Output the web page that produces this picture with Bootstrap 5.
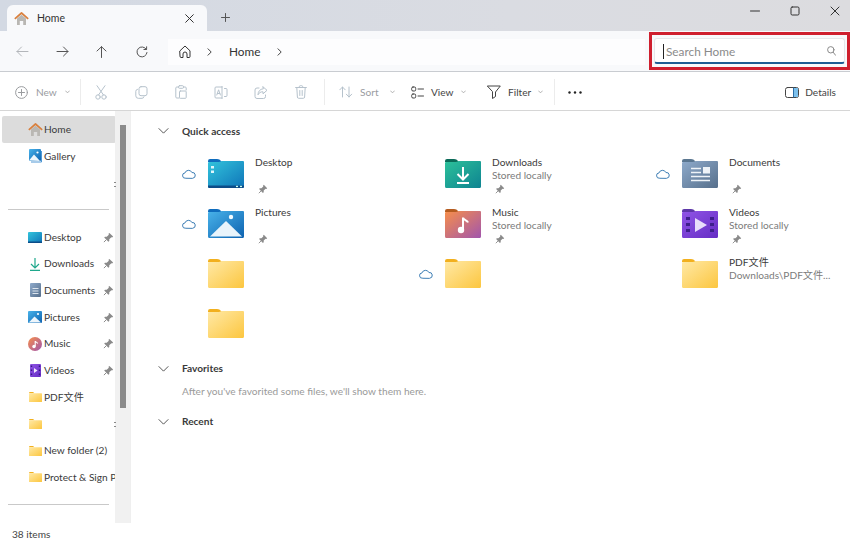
<!DOCTYPE html>
<html lang="en">
<head>
<meta charset="utf-8">
<title>Home - File Explorer</title>
<link href="https://cdn.jsdelivr.net/npm/bootstrap@5.3.0/dist/css/bootstrap.min.css" rel="stylesheet">
<style>
html,body{height:100%;}
body{width:850px;height:540px;overflow:hidden;background:#fff;color:#3a3a3a;font:10.15px/13px "Lato","Noto Sans CJK SC",sans-serif;display:flex;flex-direction:column;}
svg{display:block;flex:none;}
.defs-box{position:absolute;width:0;height:0;}
.ln{fill:none;stroke:currentColor;stroke-width:1;stroke-linecap:round;stroke-linejoin:round;}
.title-strip{height:31px;flex:none;background:linear-gradient(90deg,#d3d9e3,#dadce2 60%,#dcdcdf);padding-left:7px;}
.win-tab{width:200px;height:26px;margin-top:5px;background:#f8f9fb;border-radius:6px 6px 0 0;padding:0 13px 0 7px;font-size:10.5px;color:#333;}
.tab-plus{margin-left:14px;margin-top:13px;color:#555;}
.win-btns{margin-left:auto;color:#333;gap:30px;padding-right:10px;padding-bottom:10px;}
.nav-strip{height:41px;flex:none;background:#f8f9fb;border-bottom:1px solid #c9ccd1;padding-left:16px;padding-top:2px;}
.nav-slot{width:40px;color:#555;}
.nav-slot:first-child{color:#b3b6ba;}
.addr{width:477px;height:26px;margin-left:-8px;background:#fdfdfe;padding-left:11px;padding-bottom:1px;font-size:11.8px;color:#333;}
.addr-sep{color:#444;}
.sep-a{margin-left:16px;margin-right:17px;}
.sep-b{margin-left:17px;}
.mark-box{width:201px;height:38px;margin-left:4px;border:3px solid #cf1f2e;padding:3px 2px;margin-top:-2px;}
.search-field{height:100%;background:#fff;border:1px solid #e6e7ea;border-bottom:2px solid #1f5e94;border-radius:3px;padding:1px 8px 0;color:#8a8a8a;font-size:11.8px;}
.caret-bar{width:1px;height:15px;background:#222;margin-right:2px;}
.tool-strip{height:39px;flex:none;border-bottom:1px solid #d6d6d6;padding-left:15px;padding-top:2px;color:#9a9c9f;}
.tool-new{width:65px;gap:8px;}
.tool-div{width:1px;height:26px;background:#ececec;}
.tool-icons{width:243px;}
.tool-one{width:40px;color:#b6c2cc;}
.tool-sort{width:67px;padding-left:14px;gap:7px;}
.tool-dark{color:#444;gap:7px;}
.tool-view{width:95px;padding-left:19px;}
.tool-filter{width:67px;}
.chev-tiny{color:#a4a4a4;}
.tool-dots{margin-left:13px;color:#222;}
.tool-details{margin-left:auto;padding-right:14px;gap:6px;color:#444;}
.main-split{flex:1 1 auto;min-height:0;}
.side-pane{width:131px;flex:none;position:relative;border-right:1px solid #efefef;padding:5px 0 0 2px;}
.side-list{width:114px;}
.side-row{height:26.7px;padding-left:26px;gap:2px;white-space:nowrap;overflow:hidden;color:#3a3a3a;}
.side-row .ico-cell{width:14px;flex:none;display:flex;justify-content:center;}
.side-row.is-on{background:#dcdcdc;border-radius:2px;height:27px;}
.side-row .pin-cell{margin-left:auto;margin-right:2px;color:#8a8a8a;}
.side-gap{height:26px;}
.side-line{height:1px;background:#c9c9c9;margin:0 7px 0 6px;}
.line-a{margin-top:13px;margin-bottom:14px;}
.line-b{margin-top:13px;}
.side-track{position:absolute;left:115px;top:0;width:15px;height:412px;background:#f1f1f1;}
.side-thumb{position:absolute;left:5px;top:14px;width:6px;height:283px;background:#8b8b8b;}
.grip-a,.grip-b{position:absolute;left:114px;width:2px;height:5px;border-top:1px solid #888;border-bottom:1px solid #888;}
.grip-a{top:71px;}
.grip-b{top:311px;}
.status-strip{height:17px;flex:none;padding:6px 0 0 12px;color:#444;font-size:10.15px;}
.content-pane{flex:1 1 auto;padding:10px 0 0 27px;}
.sec-head{height:20px;font-weight:700;color:#3a3a3a;gap:13px;}
.grid-items{display:grid;grid-template-columns:repeat(3,237px);grid-auto-rows:50.2px;margin-top:14px;margin-left:17px;margin-bottom:3px;}
.tile{display:flex;align-items:flex-start;}
.cloud-cell{width:33px;flex:none;padding:13.5px 0 0 7px;color:#3f7fb5;}
.tile-ico{margin-top:3.5px;margin-right:11px;}
.tile-txt{padding-top:1px;}
.tile-sub{color:#7b7b7b;}
.tile-pin{height:13px;color:#8a8a8a;padding:2px 0 0 3px;}
.fav-note{color:#9a9a9a;margin:4px 0 13px 24px;line-height:16px;}
</style>
</head>
<body>
<svg class="defs-box" aria-hidden="true">
<defs>
<linearGradient id="gY" x1="0" y1="0" x2="1" y2="1"><stop offset="0" stop-color="#ffe9a6"/><stop offset="1" stop-color="#fcc63f"/></linearGradient>
<linearGradient id="gD" x1="0" y1="0" x2="1" y2="1"><stop offset="0" stop-color="#32c4dc"/><stop offset="1" stop-color="#0f74b8"/></linearGradient>
<linearGradient id="gP" x1="0" y1="0" x2="1" y2="1"><stop offset="0" stop-color="#49b3ea"/><stop offset="1" stop-color="#0d62b0"/></linearGradient>
<linearGradient id="gDl" x1="0" y1="0" x2="1" y2="1"><stop offset="0" stop-color="#2cc19a"/><stop offset="1" stop-color="#0e8391"/></linearGradient>
<linearGradient id="gM" x1="0" y1="0" x2="1" y2="1"><stop offset="0" stop-color="#f78f4a"/><stop offset="1" stop-color="#a155ad"/></linearGradient>
<linearGradient id="gDc" x1="0" y1="0" x2="1" y2="1"><stop offset="0" stop-color="#8eaacb"/><stop offset="1" stop-color="#566f8b"/></linearGradient>
<linearGradient id="gV" x1="0" y1="0" x2="1" y2="1"><stop offset="0" stop-color="#9055e6"/><stop offset="1" stop-color="#652cc4"/></linearGradient>
<symbol id="f-yellow" viewBox="0 0 36 29"><path d="M0 2a2 2 0 0 1 2-2h7c2 0 3 .7 4 2l1 1H0z" fill="#f2b01e"/><path d="M0 4q0-1 1-1h10l3-1h21q1 0 1 1v24.500q0 1.500-1.500 1.500h-33Q0 29 0 27.500z" fill="url(#gY)"/></symbol>
<symbol id="f-desktop" viewBox="0 0 36 29"><path d="M0 2a2 2 0 0 1 2-2h7c2 0 3 .7 4 2l1 1H0z" fill="#0f6cbd"/><path d="M0 4q0-1 1-1h10l3-1h21q1 0 1 1v24.500q0 1.500-1.500 1.500h-33Q0 29 0 27.500z" fill="url(#gD)"/><path d="M0 26.500h36v1q0 1.500-1.500 1.500h-33Q0 29 0 27.500z" fill="#0c4c88"/><rect x="3" y="7" width="3" height="2.500" fill="#dff6fb"/><rect x="3" y="11.500" width="3" height="2.500" fill="#dff6fb"/><rect x="28" y="26.800" width="2" height="1.300" fill="#cfe"/><rect x="32" y="26.800" width="2" height="1.300" fill="#cfe"/></symbol>
<symbol id="f-pics" viewBox="0 0 36 29"><path d="M0 2a2 2 0 0 1 2-2h7c2 0 3 .7 4 2l1 1H0z" fill="#0f6cbd"/><path d="M0 4q0-1 1-1h10l3-1h21q1 0 1 1v24.500q0 1.500-1.500 1.500h-33Q0 29 0 27.500z" fill="url(#gP)"/><path d="M2 27.500 18 12l16 15.500z" fill="#e9f4fb"/><circle cx="23" cy="8" r="2.200" fill="#f2fbff"/></symbol>
<symbol id="f-down" viewBox="0 0 36 29"><path d="M0 2a2 2 0 0 1 2-2h7c2 0 3 .7 4 2l1 1H0z" fill="#0b6a58"/><path d="M0 4q0-1 1-1h10l3-1h21q1 0 1 1v24.500q0 1.500-1.500 1.500h-33Q0 29 0 27.500z" fill="url(#gDl)"/><path d="M18 8v12M12.500 15l5.500 5.500 5.500-5.500M12 24h12" fill="none" stroke="#fff" stroke-width="2"/></symbol>
<symbol id="f-music" viewBox="0 0 36 29"><path d="M0 2a2 2 0 0 1 2-2h7c2 0 3 .7 4 2l1 1H0z" fill="#b55c20"/><path d="M0 4q0-1 1-1h10l3-1h21q1 0 1 1v24.500q0 1.500-1.500 1.500h-33Q0 29 0 27.500z" fill="url(#gM)"/><circle cx="16" cy="21" r="3.200" fill="#fff"/><path d="M18 21V8.500c0 2.500 4.500 2.500 5 5" fill="none" stroke="#fff" stroke-width="2"/></symbol>
<symbol id="f-docs" viewBox="0 0 36 29"><path d="M0 2a2 2 0 0 1 2-2h7c2 0 3 .7 4 2l1 1H0z" fill="#5a7690"/><path d="M0 4q0-1 1-1h10l3-1h21q1 0 1 1v24.500q0 1.500-1.500 1.500h-33Q0 29 0 27.500z" fill="url(#gDc)"/><path d="M9 9.500h10M9 13.500h10M9 17.500h19M9 21.500h19" stroke="#eef3f8" stroke-width="1.600"/><rect x="21" y="8" width="7" height="6.500" fill="#eef3f8"/></symbol>
<symbol id="f-video" viewBox="0 0 36 29"><path d="M0 2a2 2 0 0 1 2-2h7c2 0 3 .7 4 2l1 1H0z" fill="#5d37a8"/><path d="M0 4q0-1 1-1h10l3-1h21q1 0 1 1v24.500q0 1.500-1.500 1.500h-33Q0 29 0 27.500z" fill="url(#gV)"/><path d="M13 9v14l12-7z" fill="#e8dcfb"/><path d="M4 8h4v3H4zM4 14h4v3H4zM4 20h4v3H4zM28 8h4v3h-4zM28 14h4v3h-4zM28 20h4v3h-4z" fill="#3e1f8c"/></symbol>
<symbol id="i-pin" viewBox="0 0 10 10"><path d="M5.800.8 9.200 4.200 8.300 5 7.600 4.700 5.700 6.600 5.700 8.200 4.900 8.900 1.100 5.100 1.800 4.300 3.400 4.300 5.300 2.400 5 1.700z" fill="currentColor"/><path d="M3 7 .8 9.200" stroke="currentColor" stroke-width=".9"/></symbol>
<symbol id="i-cloud" viewBox="0 0 14 10"><path class="ln" d="M3.500 9.300A2.700 2.700 0 0 1 3 3.900 3.700 3.700 0 0 1 9.900 3.500 2.900 2.900 0 0 1 10.800 9.300z"/></symbol>
<symbol id="i-chev" viewBox="0 0 12 7"><path class="ln" d="M.7.7 6 6 11.300.7"/></symbol>
<symbol id="i-tiny" viewBox="0 0 6 4"><path class="ln" d="M.7.7 3 3 5.300.7"/></symbol>
<symbol id="i-home" viewBox="0 0 15 13"><path d="M3 6.500 7.500 2.800 12 6.500V13H9.200V9H5.800V13H3z" fill="#b9b7b3"/><path d="M.8 6.800 7.500 1l6.700 5.800" fill="none" stroke="#d9803e" stroke-width="1.700" stroke-linejoin="round"/></symbol>
<symbol id="i-gallery" viewBox="0 0 14 14"><rect x="1" y="0" width="12" height="12" rx="1" fill="url(#gP)"/><path d="M1 11.500 6 5.500l6 6.500z" fill="#eef6fc"/><circle cx="9.500" cy="3.500" r="1.100" fill="#fff"/><path d="M13.500 2v11H3" fill="none" stroke="#3c8dd0" stroke-width=".9"/></symbol>
<symbol id="i-sdesk" viewBox="0 0 14 11"><rect width="14" height="11" rx="1" fill="url(#gD)"/><rect y="9.500" width="14" height="1.500" fill="#0c4c88"/></symbol>
<symbol id="i-sdown" viewBox="0 0 12 14"><path d="M6 1v9.500M2 7l4 4 4-4M1 13.300h10" fill="none" stroke="#1fa88c" stroke-width="1.200"/></symbol>
<symbol id="i-sdoc" viewBox="0 0 11 14"><rect width="11" height="14" rx="1" fill="url(#gDc)"/><path d="M2.500 5.500h6M2.500 8h6M2.500 10.500h6" stroke="#e7edf4" stroke-width=".9"/></symbol>
<symbol id="i-spic" viewBox="0 0 14 12"><rect width="14" height="12" rx="1" fill="url(#gP)"/><path d="M.8 11.500 6.500 5.500l6.500 6z" fill="#eef6fc"/><circle cx="10" cy="3" r="1.100" fill="#fff"/></symbol>
<symbol id="i-smusic" viewBox="0 0 14 14"><circle cx="7" cy="7" r="7" fill="url(#gM)"/><circle cx="6" cy="9.500" r="1.700" fill="#fff"/><path d="M7.200 9.500V4c0 1 2 1.200 2.500 2.500" fill="none" stroke="#fff" stroke-width="1.100"/></symbol>
<symbol id="i-svideo" viewBox="0 0 11 13"><rect width="11" height="13" rx="1" fill="url(#gV)"/><path d="M4 4v5l3.500-2.500z" fill="#efe6fd"/><path d="M.8 1.500h1.400v1.500H.8zM.8 5.500h1.400V7H.8zM.8 9.500h1.400V11H.8zM8.800 1.500h1.400v1.500H8.800zM8.800 5.500h1.400V7H8.800zM8.800 9.500h1.400V11H8.800z" fill="#35197f"/></symbol>
<symbol id="i-sfold" viewBox="0 0 13 10"><path d="M0 1a1 1 0 0 1 1-1h3l1.500 1.200H0z" fill="#f2b01e"/><rect y="1.200" width="13" height="8.800" rx=".6" fill="url(#gY)"/></symbol>
</defs>
</svg>

<header class="title-strip d-flex align-items-start">
  <div class="win-tab d-flex align-items-center">
    <svg width="15" height="13" class="me-2"><use href="#i-home"/></svg>
    <span>Home</span>
    <svg width="9" height="9" viewBox="0 0 9 9" class="ms-auto"><path class="ln" d="M.7.7 8.300 8.300M8.300.7.700 8.300"/></svg>
  </div>
  <svg width="9" height="9" viewBox="0 0 9 9" class="tab-plus"><path class="ln" d="M4.500.5v8M.5 4.500h8"/></svg>
  <div class="win-btns d-flex align-items-center h-100">
    <svg width="10" height="10" viewBox="0 0 10 10"><path class="ln" d="M.5 5h9"/></svg>
    <svg width="10" height="10" viewBox="0 0 10 10"><rect class="ln" x="1" y="1" width="8" height="8" rx="1.200" stroke-width="1.200"/></svg>
    <svg width="10" height="10" viewBox="0 0 10 10"><path class="ln" d="M1 1l8 8M9 1 1 9"/></svg>
  </div>
</header>

<nav class="nav-strip d-flex align-items-center">
  <div class="d-flex">
    <div class="nav-slot d-flex"><svg width="13" height="11" viewBox="0 0 13 11"><path class="ln" d="M12 5.500H1M5.500 1 1 5.500 5.500 10"/></svg></div>
    <div class="nav-slot d-flex"><svg width="13" height="11" viewBox="0 0 13 11"><path class="ln" d="M1 5.500h11M7.500 1 12 5.500 7.500 10"/></svg></div>
    <div class="nav-slot d-flex"><svg width="11" height="12" viewBox="0 0 11 12"><path class="ln" d="M5.500 11.500V.7M1 5 5.500.7 10 5"/></svg></div>
    <div class="nav-slot d-flex"><svg width="12" height="12" viewBox="0 0 12 12"><path class="ln" d="M10.300 3.300A5 5 0 1 0 11 6.500M10.600 .8v2.700H7.900"/></svg></div>
  </div>
  <div class="addr d-flex align-items-center">
    <svg width="12" height="13" viewBox="0 0 12 13"><path class="ln" d="M1 5.800 6 1l5 4.800v5.700a1 1 0 0 1-1 1H8V9a2 2 0 0 0-4 0v3.500H2a1 1 0 0 1-1-1z" /></svg>
    <svg width="5" height="8" viewBox="0 0 5 8" class="addr-sep sep-a"><path class="ln" d="M1 .8 4.200 4 1 7.200"/></svg>
    <span>Home</span>
    <svg width="5" height="8" viewBox="0 0 5 8" class="addr-sep sep-b"><path class="ln" d="M1 .8 4.200 4 1 7.200"/></svg>
  </div>
  <div class="mark-box">
    <div class="search-field d-flex align-items-center">
      <span class="caret-bar"></span><span>Search Home</span>
      <svg width="9" height="10" viewBox="0 0 9 10" class="ms-auto"><circle class="ln" cx="3.800" cy="3.800" r="3.200"/><path class="ln" d="M6.200 6.300 8.600 9.300"/></svg>
    </div>
  </div>
</nav>

<div class="tool-strip d-flex align-items-center">
  <div class="tool-new d-flex align-items-center">
    <svg width="13" height="13" viewBox="0 0 13 13"><circle class="ln" cx="6.500" cy="6.500" r="5.900"/><path class="ln" d="M6.500 3.500v6M3.500 6.500h6"/></svg>
    <span>New</span>
    <svg width="5" height="4" class="chev-tiny"><use href="#i-tiny"/></svg>
  </div>
  <span class="tool-div"></span>
  <div class="tool-icons d-flex align-items-center">
    <div class="tool-one d-flex justify-content-center"><svg width="12" height="15" viewBox="0 0 12 15"><path class="ln" d="M2 .7 8.500 10M10 .7 3.500 10"/><circle class="ln" cx="3" cy="12" r="2.200"/><circle class="ln" cx="9" cy="12" r="2.200"/></svg></div>
    <div class="tool-one d-flex justify-content-center"><svg width="13" height="13" viewBox="0 0 13 13"><rect class="ln" x="4" y=".7" width="8" height="9" rx="2"/><path class="ln" d="M2.500 3.300A2 2 0 0 0 .8 5.300v4.500a2.500 2.500 0 0 0 2.500 2.500H7a2 2 0 0 0 2-1.500"/></svg></div>
    <div class="tool-one d-flex justify-content-center"><svg width="12" height="14" viewBox="0 0 12 14"><path class="ln" d="M3.500 2H1.800a1 1 0 0 0-1 1v9a1 1 0 0 0 1 1H4M8.500 2h1.700a1 1 0 0 1 1 1v2"/><rect class="ln" x="3.500" y=".7" width="5" height="2.600" rx="1"/><rect class="ln" x="4.500" y="6" width="6.700" height="7.300" rx=".8"/></svg></div>
    <div class="tool-one d-flex justify-content-center"><svg width="14" height="13" viewBox="0 0 14 13"><path class="ln" d="M8 1H2a1 1 0 0 0-1 1v9a1 1 0 0 0 1 1h6M8 .5v12M10.500 2.500h1.500a1 1 0 0 1 1 1v6a1 1 0 0 1-1 1h-1.500M2.800 9l1.800-5.200L6.400 9M3.400 7.500h2.400"/></svg></div>
    <div class="tool-one d-flex justify-content-center"><svg width="14" height="13" viewBox="0 0 14 13"><path class="ln" d="M5 2H3a2 2 0 0 0-2 2v6.500a2 2 0 0 0 2 2h6.500a2 2 0 0 0 2-2V9M9 .8 13 4.300 9 7.800V5.800C6.500 5.600 5 7 4 8.800 4 5.500 6 3 9 2.800z"/></svg></div>
    <div class="tool-one d-flex justify-content-center"><svg width="12" height="14" viewBox="0 0 12 14"><path class="ln" d="M.6 2.500h10.800M4.300 2.500V1.700a1 1 0 0 1 1-1h1.400a1 1 0 0 1 1 1v.8M1.800 2.500l.6 9.500a1.300 1.300 0 0 0 1.300 1.300h4.600a1.300 1.300 0 0 0 1.300-1.300l.6-9.500M4.800 5.500v5M7.200 5.500v5"/></svg></div>
  </div>
  <span class="tool-div"></span>
  <div class="tool-sort d-flex align-items-center">
    <svg width="14" height="12" viewBox="0 0 14 12" class="tool-one w-auto"><path class="ln" d="M3.500 11V1M.8 3.800 3.500 1l2.700 2.800M10 1v10M7.300 8.200 10 11l2.700-2.800"/></svg>
    <span>Sort</span>
    <svg width="5" height="4" class="chev-tiny ms-1"><use href="#i-tiny"/></svg>
  </div>
  <div class="tool-view tool-dark d-flex align-items-center">
    <svg width="13" height="13" viewBox="0 0 13 13"><rect class="ln" x=".7" y="1" width="4" height="4" rx="1.300"/><rect class="ln" x=".7" y="8" width="4" height="4" rx="1.300"/><path class="ln" d="M7 3h5.500M7 10h5.500"/></svg>
    <span>View</span>
    <svg width="5" height="4" class="chev-tiny"><use href="#i-tiny"/></svg>
  </div>
  <div class="tool-filter tool-dark d-flex align-items-center">
    <svg width="14" height="14" viewBox="0 0 14 14"><path class="ln" d="M.7 1h12.600L8.500 7v4.500l-3 2V7z"/></svg>
    <span>Filter</span>
    <svg width="5" height="4" class="chev-tiny"><use href="#i-tiny"/></svg>
  </div>
  <span class="tool-div"></span>
  <svg width="14" height="3" viewBox="0 0 14 3" class="tool-dots"><circle cx="1.500" cy="1.500" r="1.200" fill="currentColor"/><circle cx="7" cy="1.500" r="1.200" fill="currentColor"/><circle cx="12.500" cy="1.500" r="1.200" fill="currentColor"/></svg>
  <div class="tool-details d-flex align-items-center">
    <svg width="14" height="11" viewBox="0 0 14 11"><rect class="ln" x=".5" y=".5" width="13" height="10" rx="2"/><rect x="8.500" y="1" width="4.500" height="9" fill="#7cc0ec"/><path d="M8.500 .5v10" stroke="#2b6ea8"/></svg>
    <span>Details</span>
  </div>
</div>

<div class="main-split d-flex">
  <aside class="side-pane">
    <div class="side-list">
      <div class="side-row is-on d-flex align-items-center"><span class="ico-cell"><svg width="15" height="13"><use href="#i-home"/></svg></span><span>Home</span></div>
      <div class="side-row d-flex align-items-center"><span class="ico-cell"><svg width="14" height="14"><use href="#i-gallery"/></svg></span><span>Gallery</span></div>
      <div class="side-gap"></div>
      <div class="side-line line-a"></div>
      <div class="side-row d-flex align-items-center"><span class="ico-cell"><svg width="14" height="11"><use href="#i-sdesk"/></svg></span><span>Desktop</span><svg width="11" height="11" class="pin-cell"><use href="#i-pin"/></svg></div>
      <div class="side-row d-flex align-items-center"><span class="ico-cell"><svg width="12" height="14"><use href="#i-sdown"/></svg></span><span>Downloads</span><svg width="11" height="11" class="pin-cell"><use href="#i-pin"/></svg></div>
      <div class="side-row d-flex align-items-center"><span class="ico-cell"><svg width="11" height="14"><use href="#i-sdoc"/></svg></span><span>Documents</span><svg width="11" height="11" class="pin-cell"><use href="#i-pin"/></svg></div>
      <div class="side-row d-flex align-items-center"><span class="ico-cell"><svg width="14" height="12"><use href="#i-spic"/></svg></span><span>Pictures</span><svg width="11" height="11" class="pin-cell"><use href="#i-pin"/></svg></div>
      <div class="side-row d-flex align-items-center"><span class="ico-cell"><svg width="14" height="14"><use href="#i-smusic"/></svg></span><span>Music</span><svg width="11" height="11" class="pin-cell"><use href="#i-pin"/></svg></div>
      <div class="side-row d-flex align-items-center"><span class="ico-cell"><svg width="11" height="13"><use href="#i-svideo"/></svg></span><span>Videos</span><svg width="11" height="11" class="pin-cell"><use href="#i-pin"/></svg></div>
      <div class="side-row d-flex align-items-center"><span class="ico-cell"><svg width="13" height="10"><use href="#i-sfold"/></svg></span><span>PDF文件</span></div>
      <div class="side-row d-flex align-items-center"><span class="ico-cell"><svg width="13" height="10"><use href="#i-sfold"/></svg></span></div>
      <div class="side-row d-flex align-items-center"><span class="ico-cell"><svg width="13" height="10"><use href="#i-sfold"/></svg></span><span>New folder (2)</span></div>
      <div class="side-row d-flex align-items-center"><span class="ico-cell"><svg width="13" height="10"><use href="#i-sfold"/></svg></span><span>Protect &amp; Sign PDF</span></div>
      <div class="side-line line-b"></div>
    </div>
    <div class="side-track"><div class="side-thumb"></div></div>
    <span class="grip-a"></span><span class="grip-b"></span>
  </aside>
  <main class="content-pane">
    <div class="sec-head d-flex align-items-center"><svg width="11" height="6"><use href="#i-chev"/></svg><span>Quick access</span></div>
    <div class="grid-items">
      <div class="tile"><div class="cloud-cell"><svg width="14" height="10"><use href="#i-cloud"/></svg></div><svg class="tile-ico" width="36" height="29"><use href="#f-desktop"/></svg><div class="tile-txt"><div>Desktop</div><div>&nbsp;</div><div class="tile-pin"><svg width="10" height="10"><use href="#i-pin"/></svg></div></div></div>
      <div class="tile"><div class="cloud-cell"></div><svg class="tile-ico" width="36" height="29"><use href="#f-down"/></svg><div class="tile-txt"><div>Downloads</div><div class="tile-sub">Stored locally</div><div class="tile-pin"><svg width="10" height="10"><use href="#i-pin"/></svg></div></div></div>
      <div class="tile"><div class="cloud-cell"><svg width="14" height="10"><use href="#i-cloud"/></svg></div><svg class="tile-ico" width="36" height="29"><use href="#f-docs"/></svg><div class="tile-txt"><div>Documents</div><div>&nbsp;</div><div class="tile-pin"><svg width="10" height="10"><use href="#i-pin"/></svg></div></div></div>
      <div class="tile"><div class="cloud-cell"><svg width="14" height="10"><use href="#i-cloud"/></svg></div><svg class="tile-ico" width="36" height="29"><use href="#f-pics"/></svg><div class="tile-txt"><div>Pictures</div><div>&nbsp;</div><div class="tile-pin"><svg width="10" height="10"><use href="#i-pin"/></svg></div></div></div>
      <div class="tile"><div class="cloud-cell"></div><svg class="tile-ico" width="36" height="29"><use href="#f-music"/></svg><div class="tile-txt"><div>Music</div><div class="tile-sub">Stored locally</div><div class="tile-pin"><svg width="10" height="10"><use href="#i-pin"/></svg></div></div></div>
      <div class="tile"><div class="cloud-cell"></div><svg class="tile-ico" width="36" height="29"><use href="#f-video"/></svg><div class="tile-txt"><div>Videos</div><div class="tile-sub">Stored locally</div><div class="tile-pin"><svg width="10" height="10"><use href="#i-pin"/></svg></div></div></div>
      <div class="tile"><div class="cloud-cell"></div><svg class="tile-ico" width="36" height="29"><use href="#f-yellow"/></svg></div>
      <div class="tile"><div class="cloud-cell"><svg width="14" height="10"><use href="#i-cloud"/></svg></div><svg class="tile-ico" width="36" height="29"><use href="#f-yellow"/></svg></div>
      <div class="tile"><div class="cloud-cell"></div><svg class="tile-ico" width="36" height="29"><use href="#f-yellow"/></svg><div class="tile-txt"><div>PDF文件</div><div class="tile-sub">Downloads\PDF文件...</div></div></div>
      <div class="tile"><div class="cloud-cell"></div><svg class="tile-ico" width="36" height="29"><use href="#f-yellow"/></svg></div>
    </div>
    <div class="sec-head d-flex align-items-center"><svg width="11" height="6"><use href="#i-chev"/></svg><span>Favorites</span></div>
    <div class="fav-note">After you've favorited some files, we'll show them here.</div>
    <div class="sec-head d-flex align-items-center"><svg width="11" height="6"><use href="#i-chev"/></svg><span>Recent</span></div>
  </main>
</div>

<footer class="status-strip d-flex align-items-center">38 items</footer>
</body>
</html>
